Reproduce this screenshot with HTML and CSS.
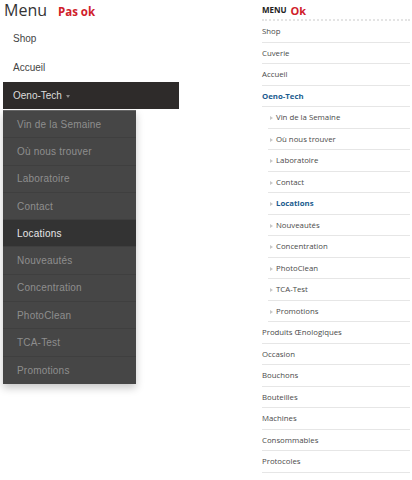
FILE: index.html
```html
<!DOCTYPE html>
<html lang="fr">
<head>
<meta charset="utf-8">
<title>Menu</title>
<link rel="stylesheet" href="styles.css">
</head>
<body>
<div class="page">
  <section class="left">
    <div class="left-head"><span class="left-title">Menu</span><span class="tag">Pas ok</span></div>
    <ul class="nav">
      <li class="nav-item">Shop</li>
      <li class="nav-item">Accueil</li>
      <li class="nav-item active">
        <span>Oeno-Tech</span><span class="caret"></span>
        <ul class="dropdown">
          <li>Vin de la Semaine</li>
          <li>Où nous trouver</li>
          <li>Laboratoire</li>
          <li>Contact</li>
          <li class="current">Locations</li>
          <li>Nouveautés</li>
          <li>Concentration</li>
          <li>PhotoClean</li>
          <li>TCA-Test</li>
          <li>Promotions</li>
        </ul>
      </li>
    </ul>
  </section>
  <section class="right">
    <div class="right-head"><span class="right-title">MENU</span><span class="tag-ok">Ok</span></div>
    <ul class="list">
      <li>Shop</li>
      <li>Cuverie</li>
      <li>Accueil</li>
      <li class="sel">Oeno-Tech</li>
      <li class="sub">Vin de la Semaine</li>
      <li class="sub">Où nous trouver</li>
      <li class="sub">Laboratoire</li>
      <li class="sub">Contact</li>
      <li class="sub sel">Locations</li>
      <li class="sub">Nouveautés</li>
      <li class="sub">Concentration</li>
      <li class="sub">PhotoClean</li>
      <li class="sub">TCA-Test</li>
      <li class="sub">Promotions</li>
      <li>Produits Œnologiques</li>
      <li>Occasion</li>
      <li>Bouchons</li>
      <li>Bouteilles</li>
      <li>Machines</li>
      <li>Consommables</li>
      <li>Protocoles</li>
    </ul>
  </section>
</div>
</body>
</html>
```
FILE: styles.css
```css
* { box-sizing: border-box; }
html, body { margin: 0; padding: 0; background: #fff; }
body { font-family: "Liberation Sans", Arial, sans-serif; }
ul { list-style: none; margin: 0; padding: 0; }

.page {
  display: flex;
  width: 412px;
  height: 480px;
}

/* Left panel */
.left {
  width: 259px;
  padding-left: 3px;
}
.left-head {
  height: 24px;
  display: flex;
  align-items: flex-start;
  padding-left: 1px;
}
.left-title {
  font-family: "Open Sans", sans-serif;
  font-size: 16px;
  line-height: 20px;
  color: #333;
}
.tag {
  font-family: "Open Sans", sans-serif;
  font-weight: 700;
  color: #d0202a;
  font-size: 11.5px;
  margin-left: 11px;
  margin-top: 5px;
  line-height: 14px;
}
.nav { width: 176px; }
.nav-item {
  height: 29px;
  display: flex;
  align-items: center;
  padding-left: 10px;
  font-size: 10px;
  color: #444;
}
.nav-item.active {
  position: relative;
  height: 27px;
  background: #2e2b2a;
  color: #ddd;
}
.caret {
  width: 0;
  height: 0;
  border-left: 2.5px solid transparent;
  border-right: 2.5px solid transparent;
  border-top: 3px solid #888;
  margin-left: 4px;
  margin-top: 1px;
}
.dropdown {
  position: absolute;
  left: 0;
  top: 28px;
  width: 133px;
  background: #464646;
  box-shadow: 0 4px 8px rgba(0, 0, 0, 0.22);
  border-top: 1px solid #666;
}
.dropdown li {
  height: 27.3px;
  display: flex;
  align-items: center;
  padding-left: 14px;
  font-size: 10px;
  letter-spacing: 0.2px;
  color: #8e8e8e;
  border-bottom: 1px solid #3f3f3f;
}
.dropdown li:last-child { border-bottom: 0; }
.dropdown li.current {
  background: #333;
  color: #e8e8e8;
}

/* Right panel */
.right {
  width: 148px;
  margin-left: 3px;
  font-family: "Open Sans", sans-serif;
}
.right-head {
  height: 21px;
  display: flex;
  align-items: flex-start;
  border-bottom: 2px dotted #e4e4e4;
}
.right-title {
  font-size: 8px;
  font-weight: 700;
  color: #222;
  margin-top: 5px;
  line-height: 10px;
}
.tag-ok {
  font-weight: 700;
  color: #d0202a;
  font-size: 11px;
  margin-left: 4px;
  margin-top: 4px;
  line-height: 13px;
}
.list li {
  height: 21.5px;
  display: flex;
  align-items: center;
  font-size: 7.8px;
  color: #4a4a4a;
  border-bottom: 1px solid #e6e6e6;
}
.list li.sub {
  margin-left: 6px;
  padding-left: 8px;
  position: relative;
}
.list li.sub::before {
  content: "";
  position: absolute;
  left: 2px;
  top: 9px;
  border-top: 2px solid transparent;
  border-bottom: 2px solid transparent;
  border-left: 3px solid #c8c8c8;
}
.list li.sel {
  color: #1b5c8f;
  font-weight: 700;
}
```
